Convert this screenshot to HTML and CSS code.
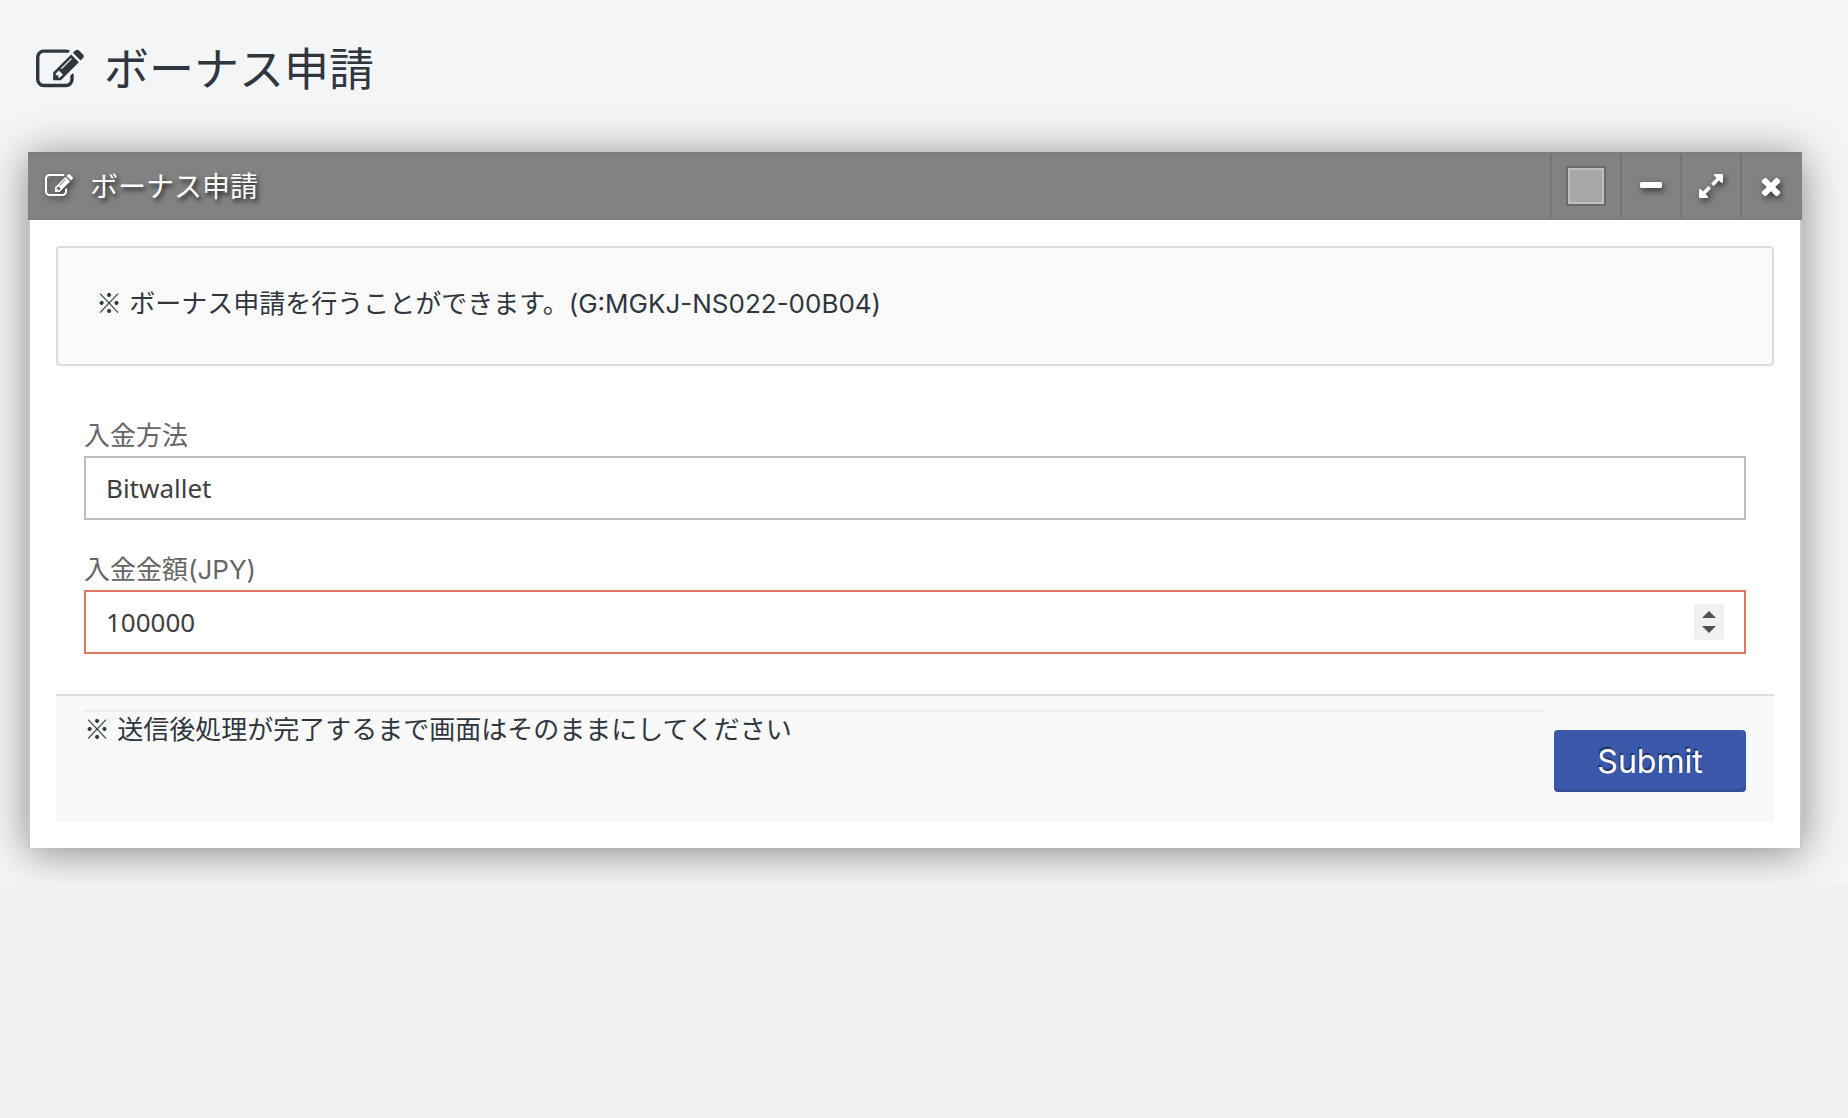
FILE: index.html
```
<!DOCTYPE html>
<html lang="ja">
<head>
  <meta charset="utf-8">
  <title>ボーナス申請</title>
  <link rel="stylesheet" href="styles.css">
</head>
<body>
  <svg class="symbols" aria-hidden="true">
    <symbol id="icon-edit" viewBox="0 0 1792 1792">
      <path d="M888 1184l116-116-152-152-116 116v56h96v96h56zm440-720q-16-16-33 1l-350 350q-17 17-1 33t33-1l350-350q17-17 1-33zm80 594v190q0 119-84.500 203.500t-203.500 84.500h-832q-119 0-203.500-84.500t-84.500-203.500v-832q0-119 84.500-203.500t203.500-84.500h832q63 0 117 25 15 7 18 23 3 17-9 29l-49 49q-14 14-32 8-23-6-45-6h-832q-66 0-113 47t-47 113v832q0 66 47 113t113 47h832q66 0 113-47t47-113v-126q0-13 9-22l64-64q15-15 35-7t20 29zm-96-738l288 288-672 672h-288v-288zm444 132l-92 92-288-288 92-92q28-28 68-28t68 28l152 152q28 28 28 68t-28 68z"/>
    </symbol>
  </svg>

  <main class="content">
    <h1 class="page-title">
      <svg class="icon-large"><use href="#icon-edit"/></svg>
      ボーナス申請
    </h1>

    <section class="widget">
      <header class="widget-header">
        <svg class="icon"><use href="#icon-edit"/></svg>
        <h2>ボーナス申請</h2>
        <div class="toolbar">
          <button type="button" class="tool tool-color" aria-label="Color"><span class="swatch"></span></button>
          <button type="button" class="tool" aria-label="Collapse">
            <svg class="icon" viewBox="0 0 1792 1792"><path d="M1600 736v192q0 40-28 68t-68 28h-1216q-40 0-68-28t-28-68v-192q0-40 28-68t68-28h1216q40 0 68 28t28 68z"/></svg>
          </button>
          <button type="button" class="tool" aria-label="Fullscreen">
            <svg class="icon" viewBox="0 0 1792 1792"><path d="M883 1056q0 13-10 23l-332 332 144 144q19 19 19 45t-19 45-45 19h-448q-26 0-45-19t-19-45v-448q0-26 19-45t45-19 45 19l144 144 332-332q10-10 23-10t23 10l114 114q10 10 10 23zm781-864v448q0 26-19 45t-45 19-45-19l-144-144-332 332q-10 10-23 10t-23-10l-114-114q-10-10-10-23t10-23l332-332-144-144q-19-19-19-45t19-45 45-19h448q26 0 45 19t19 45z"/></svg>
          </button>
          <button type="button" class="tool" aria-label="Delete">
            <svg class="icon" viewBox="0 0 1792 1792"><path d="M1490 1322q0 40-28 68l-136 136q-28 28-68 28t-68-28l-294-294-294 294q-28 28-68 28t-68-28l-136-136q-28-28-28-68t28-68l294-294-294-294q-28-28-28-68t28-68l136-136q28-28 68-28t68 28l294 294 294-294q28-28 68-28t68 28l136 136q28 28 28 68t-28 68l-294 294 294 294q28 28 28 68z"/></svg>
          </button>
        </div>
      </header>

      <div class="widget-body">
        <div class="well"><span class="mark">※</span> ボーナス申請を行うことができます。(G:MGKJ-NS022-00B04)</div>

        <form>
          <div class="fields">
            <div class="field">
              <label for="method">入金方法</label>
              <input type="text" id="method" class="input" value="Bitwallet">
            </div>
            <div class="field">
              <label for="amount">入金金額(JPY)</label>
              <div class="number">
                <input type="number" id="amount" class="input error" value="100000">
                <div class="spinner">
                  <button type="button" class="step up" aria-label="Up" onclick="amount.stepUp()"></button>
                  <button type="button" class="step down" aria-label="Down" onclick="amount.stepDown()"></button>
                </div>
              </div>
            </div>
          </div>

          <footer class="form-footer">
            <p class="note"><span class="mark">※</span> 送信後処理が完了するまで画面はそのままにしてください</p>
            <button type="submit" class="submit">Submit</button>
          </footer>
        </form>
      </div>
    </section>
  </main>
</body>
</html>
```
FILE: styles.css
```
* {
  box-sizing: border-box;
}

body {
  margin: 0;
  background-color: #f0f1f3;
  color: #30363e;
  font-family: Inter, "Noto Sans CJK JP", sans-serif;
  font-size: 26px;
  line-height: 36px;
}

button,
input {
  margin: 0;
  font-family: inherit;
}

.symbols {
  display: none;
}

.content {
  padding: 40px 46px 34px 28px;
  background-color: #f4f5f7;
}

.page-title {
  display: flex;
  align-items: center;
  gap: 20px;
  margin: 0 0 52px;
  padding-left: 8px;
  font-size: 45px;
  font-weight: 400;
  line-height: 60px;
}

.icon,
.icon-large {
  width: 28px;
  height: 28px;
  fill: currentColor;
}

.icon-large {
  width: 48px;
  height: 48px;
}

.widget {
  box-shadow: 0 4px 40px rgba(0, 0, 0, 0.45);
}

.widget-header {
  display: flex;
  align-items: center;
  height: 68px;
  padding: 0 2px 0 17px;
  border: 2px solid #7d7d7d;
  border-right: 0;
  border-left: 0;
  background-color: #828282;
  color: #fff;
}

.widget-header .icon {
  filter: drop-shadow(2px 3px 3px rgba(0, 0, 0, 0.6));
}

.widget-header h2 {
  margin: 0 0 0 17px;
  padding-top: 2px;
  font-size: 28px;
  font-weight: 400;
  text-shadow: 2px 3px 5px rgba(0, 0, 0, 0.8);
}

.toolbar {
  display: flex;
  align-self: stretch;
  margin-left: auto;
}

.tool {
  display: flex;
  align-items: center;
  justify-content: center;
  width: 60px;
  padding: 0;
  border: 0;
  border-left: 2px solid #757575;
  background: none;
  color: #fff;
  cursor: pointer;
}

.tool-color {
  width: 70px;
}

.swatch {
  width: 40px;
  height: 40px;
  border: 2px solid #6a6a6a;
  background-color: #a8a8a8;
  box-shadow: inset 0 0 0 2px #c0c0c0;
}

.widget-body {
  padding: 26px;
  border: 2px solid #c8c8c8;
  border-top: 0;
  border-bottom: 0;
  background-color: #fff;
}

.well {
  padding: 38px 38px 42px;
  border: 2px solid #ddd;
  border-radius: 4px;
  background-color: #fafafa;
}

/* full-width reference mark */
.mark {
  font-family: "Noto Sans CJK JP", sans-serif;
  line-height: 1;
}

.fields {
  display: flex;
  flex-direction: column;
  gap: 32px;
  padding: 52px 28px 40px;
}

.field {
  display: flex;
  flex-direction: column;
  gap: 2px;
}

.field label {
  color: #666;
}

.input {
  display: block;
  width: 100%;
  height: 64px;
  padding: 0 20px;
  border: 2px solid #bdbdbd;
  border-radius: 0;
  outline: 0;
  background-color: #fff;
  color: #404040;
  font-family: "Noto Sans", sans-serif;
  font-size: 26px;
  appearance: textfield;
}

.input::-webkit-inner-spin-button {
  display: none;
}

.input.error {
  border-color: #e1775f;
}

.number {
  position: relative;
}

/* stepper over the right end of the number box */
.spinner {
  position: absolute;
  top: 14px;
  right: 22px;
  display: flex;
  flex-direction: column;
  width: 30px;
  height: 36px;
  border-radius: 2px;
  background-color: #f1f1f1;
}

.step {
  display: flex;
  flex: 1;
  align-items: flex-end;
  justify-content: center;
  padding: 4px 0;
  border: 0;
  background: none;
}

.step.down {
  align-items: flex-start;
}

.step::before {
  content: "";
  border: 7px solid transparent;
  border-top-width: 0;
  border-bottom: 7px solid #505050;
}

.step.down::before {
  border-top: 7px solid #505050;
  border-bottom-width: 0;
}

.form-footer {
  display: flex;
  align-items: flex-start;
  gap: 10px;
  padding: 14px 28px 30px;
  border-top: 2px solid #ddd;
  background-color: #f9f9f9;
}

.note {
  flex: 1;
  margin: 0;
  border-top: 2px solid #eee;
}

.submit {
  width: 192px;
  height: 62px;
  margin-top: 20px;
  padding: 0;
  border: 0;
  border-radius: 4px;
  background-color: #3b59aa;
  box-shadow: inset 0 -3px 1px rgba(0, 0, 0, 0.1);
  color: #fff;
  font-size: 32px;
  text-shadow: -1px -2px 1px rgba(0, 0, 0, 0.45);
  cursor: pointer;
}
```
